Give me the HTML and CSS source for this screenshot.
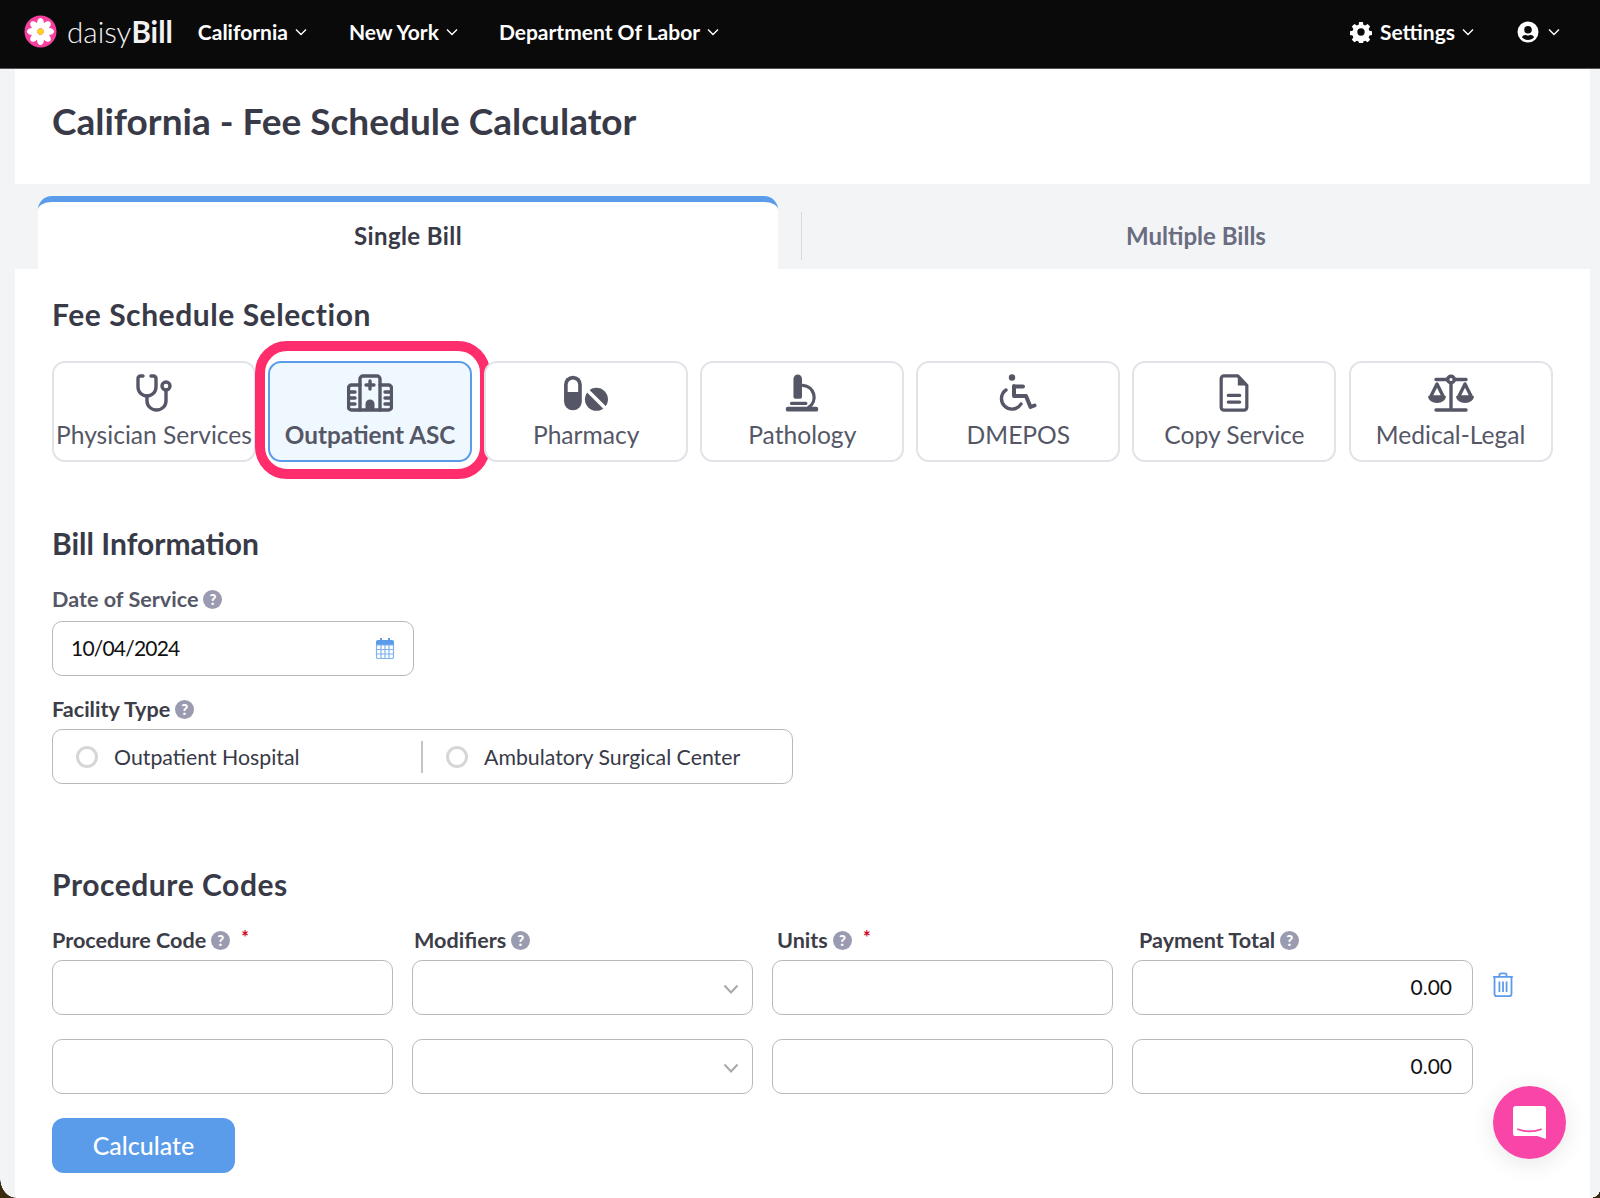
FILE: index.html
```html
<!DOCTYPE html>
<html lang="en">
<head>
  <meta charset="UTF-8" />
  <title>California - Fee Schedule Calculator</title>
  <link rel="stylesheet" href="styles.css">
</head>
<body>

  <!-- Top nav -->
  <nav class="topnav">
    <a class="logo">
      <svg class="logo-mark" viewBox="0 0 34 34">
        <circle cx="17" cy="17" r="16.5" fill="#f5409e"/>
        <g fill="#fff">
          <ellipse cx="17" cy="8.5" rx="3.6" ry="5.5"/>
          <ellipse cx="17" cy="8.5" rx="3.6" ry="5.5" transform="rotate(45 17 17)"/>
          <ellipse cx="17" cy="8.5" rx="3.6" ry="5.5" transform="rotate(90 17 17)"/>
          <ellipse cx="17" cy="8.5" rx="3.6" ry="5.5" transform="rotate(135 17 17)"/>
          <ellipse cx="17" cy="8.5" rx="3.6" ry="5.5" transform="rotate(180 17 17)"/>
          <ellipse cx="17" cy="8.5" rx="3.6" ry="5.5" transform="rotate(225 17 17)"/>
          <ellipse cx="17" cy="8.5" rx="3.6" ry="5.5" transform="rotate(270 17 17)"/>
          <ellipse cx="17" cy="8.5" rx="3.6" ry="5.5" transform="rotate(315 17 17)"/>
        </g>
        <circle cx="17" cy="17" r="3.2" fill="#ffd21f"/>
      </svg>
      <span class="logo-text">daisy<b>Bill</b></span>
    </a>
    <a class="nav-link nav-california">California <svg class="caret" viewBox="0 0 12 8"><path d="M1 1.500l5 5 5-5"/></svg></a>
    <a class="nav-link nav-newyork">New York <svg class="caret" viewBox="0 0 12 8"><path d="M1 1.500l5 5 5-5"/></svg></a>
    <a class="nav-link">Department Of Labor <svg class="caret" viewBox="0 0 12 8"><path d="M1 1.500l5 5 5-5"/></svg></a>
    <div class="nav-right">
      <a class="nav-link">
        <svg class="nav-icon" viewBox="0 0 24 24"><path fill-rule="evenodd" d="M10 1h4l.6 3 2 .9 2.600-1.700 2.800 2.800-1.700 2.600.9 2 3 .6v4l-3 .6-.9 2 1.700 2.600-2.800 2.800-2.600-1.700-2 .9-.6 3h-4l-.6-3-2-.9-2.600 1.700-2.800-2.800 1.700-2.600-.9-2-3-.6v-4l3-.6.9-2-1.700-2.600 2.800-2.800 2.600 1.700 2-.9zM12 8a4 4 0 1 0 0 8 4 4 0 0 0 0-8z"/></svg>
        Settings <svg class="caret" viewBox="0 0 12 8"><path d="M1 1.500l5 5 5-5"/></svg>
      </a>
      <a class="nav-link nav-user">
        <svg class="nav-icon" viewBox="1 1 22 22"><path fill-rule="evenodd" d="M12 1.500a10.500 10.500 0 1 1 0 21 10.500 10.500 0 0 1 0-21zM12 6a3.800 3.800 0 1 0 0 7.600A3.800 3.800 0 0 0 12 6zM12 20c2.400 0 4.500-1 6-2.700-.5-1.500-1.800-2.300-3.300-2.300-.9 0-1.500.5-2.700.5S10.200 15 9.300 15C7.800 15 6.500 15.800 6 17.300 7.500 19 9.600 20 12 20z"/></svg>
        <svg class="caret" viewBox="0 0 12 8"><path d="M1 1.500l5 5 5-5"/></svg>
      </a>
    </div>
  </nav>

  <main class="page">
    <header class="page-header">
      <h1>California - Fee Schedule Calculator</h1>
    </header>

    <div class="tabs">
      <div class="tab tab-active">Single Bill</div>
      <div class="tab-divider"></div>
      <div class="tab">Multiple Bills</div>
    </div>

    <section class="panel">
      <h2>Fee Schedule Selection</h2>
      <div class="schedule-grid">
        <div class="schedule-card">
          <svg class="card-icon" viewBox="0 0 38 38"><path d="M8 2H5.500A2.500 2.500 0 0 0 3 4.500V13a9 9 0 0 0 18 0V4.500A2.500 2.500 0 0 0 18.500 2H16"/><path d="M12 22v5a9.500 9 0 0 0 19 0V16"/><circle cx="31" cy="12" r="4"/></svg>
          <span class="card-name">Physician Services</span>
        </div>
        <div class="schedule-card card-selected">
          <svg class="card-icon icon-wide" viewBox="0 0 46 38"><path d="M13 11H4.500A3 3 0 0 0 1.500 14v19a3 3 0 0 0 3 3h37a3 3 0 0 0 3-3V14a3 3 0 0 0-3-3H33"/><path d="M13 36V5a3 3 0 0 1 3-3h14a3 3 0 0 1 3 3v31"/><path class="solid" d="M18.500 36v-6a4.500 4.500 0 0 1 9 0v6z"/><path d="M23 7v8M19 11h8M1.500 18H8M1.500 24H8M1.500 30H8M38 18h6.500M38 24h6.500M38 30h6.500"/></svg>
          <span class="card-name">Outpatient ASC</span>
          <div class="callout"></div>
        </div>
        <div class="schedule-card">
          <svg class="card-icon icon-wide" viewBox="0 0 44 34"><path class="solid" d="M1 9a8.500 8.500 0 0 1 17 0v16a8.500 8.500 0 0 1-17 0z"/><path class="knock" d="M4.500 16V9a5 5 0 0 1 10 0v7z"/><circle class="solid" cx="32" cy="23" r="11"/><path class="knock-line" d="M24 15l16 16"/></svg>
          <span class="card-name">Pharmacy</span>
        </div>
        <div class="schedule-card">
          <svg class="card-icon" viewBox="0 0 40 40"><path class="solid" d="M11 5a4.500 4.500 0 0 1 9 0v19a2 2 0 0 1-2 2h-5a2 2 0 0 1-2-2z"/><path d="M21 12a12.500 12.500 0 0 1 6 23"/><path d="M9 31h15"/><rect class="solid" x="3" y="34.500" width="34" height="5" rx="2"/></svg>
          <span class="card-name">Pathology</span>
        </div>
        <div class="schedule-card">
          <svg class="card-icon" viewBox="0 0 38 38"><circle class="solid" cx="13" cy="3.500" r="3.200"/><path class="thick" d="M15 12v10h12l4.500 11 4-1.500M15 12.500h9"/><path d="M7 16a10.500 10.500 0 1 0 15 14"/></svg>
          <span class="card-name">DMEPOS</span>
        </div>
        <div class="schedule-card">
          <svg class="card-icon" viewBox="0 0 40 40"><path d="M24 2H9.500a3 3 0 0 0-3 3v30a3 3 0 0 0 3 3h21a3 3 0 0 0 3-3V12z"/><path class="solid" d="M24 2v10h9.500z"/><path d="M14 22.500h12M14 29.500h12"/></svg>
          <span class="card-name">Copy Service</span>
        </div>
        <div class="schedule-card">
          <svg class="card-icon icon-wide" viewBox="0 0 46 38"><circle cx="23" cy="5.500" r="3.300"/><path d="M8 5.500h11.500M26.500 5.500H38M23 9v27M8 36h30M9 10L2.500 23h13zM37 10l-6.500 13h13z"/><path class="solid" d="M0 22h18a9 7 0 0 1-18 0zM28 22h18a9 7 0 0 1-18 0z"/></svg>
          <span class="card-name">Medical-Legal</span>
        </div>
      </div>

      <h2 class="bill-title">Bill Information</h2>
      <label class="field-label date-label">Date of Service <i class="help">?</i></label>
      <div class="input date-input">
        <span class="date-value">10/04/2024</span>
        <svg class="calendar" viewBox="0 0 20 22"><path class="cal-head" d="M1 5a2 2 0 0 1 2-2h14a2 2 0 0 1 2 2v3H1z"/><path class="cal-rings" d="M6 1v4M14 1v4"/><path class="cal-grid" d="M1.500 8h17v12a1.500 1.500 0 0 1-1.500 1.500H3A1.500 1.500 0 0 1 1.500 20zM1.500 12.500h17M1.500 17h17M6 8v13.500M10 8v13.500M14 8v13.500"/></svg>
      </div>

      <label class="field-label facility-label">Facility Type <i class="help">?</i></label>
      <div class="input radio-group">
        <div class="radio-option"><span class="radio"></span>Outpatient Hospital</div>
        <div class="radio-option radio-second"><span class="radio"></span>Ambulatory Surgical Center</div>
      </div>

      <h2 class="codes-title">Procedure Codes</h2>
      <div class="codes-grid">
        <label class="field-label">Procedure Code <i class="help">?</i><em class="req">*</em></label>
        <label class="field-label label-modifiers">Modifiers <i class="help">?</i></label>
        <label class="field-label label-units">Units <i class="help">?</i><em class="req">*</em></label>
        <label class="field-label label-payment">Payment Total <i class="help">?</i></label>
        <span></span>

        <div class="input"></div>
        <div class="input select"><svg class="select-caret" viewBox="0 0 16 10"><path d="M1.500 1.500L8 8.500l6.500-7"/></svg></div>
        <div class="input"></div>
        <div class="input amount">0.00</div>
        <svg class="trash" viewBox="0 0 24 28"><path d="M1 5.500h22M8 5V3.500A2 2 0 0 1 10 1.500h4a2 2 0 0 1 2 2V5M2.500 6v18.500a2.500 2.500 0 0 0 2.500 2.500h14a2.500 2.500 0 0 0 2.500-2.500V6M8 10.500v12M12 10.500v12M16 10.500v12"/></svg>

        <div class="input"></div>
        <div class="input select"><svg class="select-caret" viewBox="0 0 16 10"><path d="M1.500 1.500L8 8.500l6.500-7"/></svg></div>
        <div class="input"></div>
        <div class="input amount">0.00</div>
        <span></span>
      </div>

      <button class="calc-button">Calculate</button>
    </section>
  </main>

  <!-- Chat launcher floats over the page -->
  <div class="chat-launcher">
    <svg viewBox="0 0 34 34" class="chat-icon"><path fill="#fff" d="M3 0h28a3 3 0 0 1 3 3v31l-9-3H3a3 3 0 0 1-3-3V3a3 3 0 0 1 3-3z"/><path fill="none" stroke="#f945a7" stroke-width="1.800" stroke-linecap="round" d="M5 24c7 3 17 3 24 0"/></svg>
  </div>

  <!-- window corners of the capture -->
  <div class="corner corner-left"></div>
  <div class="corner corner-right"></div>

</body>
</html>
```

FILE: styles.css
```css
* {
  box-sizing: border-box;
}

html, body {
  margin: 0;
  height: 1198px;
  overflow: hidden;
}

body {
  background: #f3f4f6;
  font-family: "Lato", "Liberation Sans", sans-serif;
  color: #383a47;
}

.topnav {
  display: flex;
  align-items: center;
  height: 69px;
  padding: 0 24px 5px;
  background: #0a0a0b;
  border-bottom: 1px solid #55565a;
  color: #fff;
}

.logo {
  display: flex;
  align-items: center;
  margin-right: 25px;
}

.logo-mark {
  width: 33px;
  height: 33px;
  margin-right: 10px;
}

.logo-text {
  font-size: 29.600px;
  font-weight: 300;
  color: #f2f2f2;
}

.logo-text b {
  font-weight: 700;
}

.nav-link {
  display: flex;
  align-items: center;
  gap: 7px;
  font-size: 21px;
  font-weight: 700;
  white-space: nowrap;
}

.nav-california {
  margin-right: 42px;
}

.nav-newyork {
  margin-right: 41px;
}

.nav-right {
  display: flex;
  align-items: center;
  margin-left: auto;
  margin-right: 16px;
}

.nav-icon {
  width: 22px;
  height: 22px;
  fill: #fff;
  margin-right: 1px;
}

.nav-user {
  margin-left: 43px;
  gap: 8px;
}

.caret {
  width: 12px;
  height: 8px;
  fill: none;
  stroke: #fff;
  stroke-width: 1.4;
}

.page {
  margin: 0 10px 0 15px;
}

.page-header {
  height: 115px;
  padding: 29px 37px 0;
  background: #fff;
}

h1 {
  margin: 0;
  font-size: 37px;
  font-weight: 700;
  line-height: 46px;
}

.tabs {
  display: flex;
  align-items: stretch;
  height: 85px;
  padding: 12px 0 0 23px;
  font-size: 24px;
  font-weight: 700;
}

.tab {
  flex: 1;
  display: flex;
  align-items: center;
  justify-content: center;
  padding-top: 6px;
  color: #6a6c80;
}

.tab-active {
  flex: 0 0 740px;
  padding-top: 0;
  background: #fff;
  border-top: 6px solid #5a9bea;
  border-radius: 14px 14px 0 0;
  letter-spacing: 0.4px;
  color: #383a47;
}

.tab-divider {
  width: 1px;
  margin: 16px 0 9px 23px;
  background: #d8d9df;
}

.panel {
  height: 929px;
  padding: 23px 37px 0;
  background: #fff;
}

h2 {
  margin: 0;
  font-size: 30px;
  font-weight: 700;
  line-height: 44px;
  letter-spacing: 0.55px;
}

.schedule-grid {
  display: grid;
  grid-template-columns: repeat(7, 204px);
  gap: 12.1px;
  margin-top: 25px;
  width: 1502px;
}

.schedule-card {
  position: relative;
  display: flex;
  flex-direction: column;
  align-items: center;
  height: 101px;
  padding-top: 11px;
  background: #fff;
  border: 2px solid #e2e3e8;
  border-radius: 13px;
  color: #555766;
}

.card-name {
  position: absolute;
  left: -4px;
  right: -4px;
  top: 57px;
  text-align: center;
  font-size: 24.6px;
  line-height: 30px;
  white-space: nowrap;
}

.card-icon {
  width: 38px;
  height: 38px;
  fill: none;
  stroke: #555766;
  stroke-width: 3.4;
  stroke-linecap: round;
  stroke-linejoin: round;
}

.icon-wide {
  width: 46px;
}

.card-icon .solid {
  fill: #555766;
  stroke: none;
}

.card-icon .thick {
  stroke-width: 4;
}

.card-icon .knock {
  fill: #fff;
  stroke: none;
}

.card-icon .knock-line {
  stroke: #fff;
}

.card-selected {
  background: #f0f8ff;
  border: 2px solid #5a9bea;
}

.card-selected .card-name {
  font-size: 24.3px;
  font-weight: 700;
}

/* pink marker drawn over the screenshot */
.callout {
  position: absolute;
  left: -15px;
  right: -20px;
  top: -22px;
  bottom: -19px;
  border: 10px solid #ff2d6b;
  border-radius: 32px;
  pointer-events: none;
}

.bill-title {
  margin-top: 59px;
  letter-spacing: 0;
}

.field-label {
  display: flex;
  align-items: center;
  font-size: 21.6px;
  font-weight: 700;
  line-height: 26px;
  color: #3c3d47;
  white-space: nowrap;
}

.panel > .field-label {
  margin-top: 21px;
}

.panel > .date-label {
  color: #555766;
}

.label-modifiers {
  padding-left: 2px;
}

.label-units {
  padding-left: 5px;
}

.label-payment {
  padding-left: 7px;
}

.help {
  display: inline-block;
  width: 19px;
  height: 19px;
  margin-left: 5px;
  border-radius: 50%;
  background: #9a9bb0;
  color: #fff;
  font-size: 15px;
  font-style: normal;
  font-weight: 900;
  line-height: 19px;
  text-align: center;
}

.req {
  margin-left: 11px;
  margin-bottom: 6px;
  color: #d0021b;
  font-size: 18px;
  font-style: normal;
  line-height: 18px;
}

.input {
  height: 55px;
  border: 1.5px solid #b9b9bd;
  border-radius: 10px;
  background: #fff;
  color: #111;
  font-size: 21px;
}

.date-input {
  display: flex;
  align-items: center;
  justify-content: space-between;
  width: 362px;
  margin-top: 9px;
  padding: 0 18px 2px;
}

.date-value {
  letter-spacing: -0.8px;
}

.calendar {
  width: 20px;
  height: 22px;
}

.cal-head {
  fill: #5a9bea;
}

.cal-rings {
  fill: none;
  stroke: #5a9bea;
  stroke-width: 2;
}

.cal-grid {
  fill: none;
  stroke: #7fb2ee;
  stroke-width: 1.2;
}

.panel > .facility-label {
  margin-top: 20px;
}

.radio-group {
  display: flex;
  align-items: center;
  width: 741px;
  margin-top: 7px;
  font-size: 21.3px;
}

.radio-option {
  display: flex;
  align-items: center;
  height: 32px;
  width: 368px;
  padding-left: 23px;
  color: #383a47;
}

.radio-second {
  border-left: 2px solid #c4c4c8;
}

.radio {
  width: 22px;
  height: 22px;
  margin-right: 16px;
  border: 3px solid #d6d6d6;
  border-radius: 50%;
}

.codes-title {
  margin-top: 78px;
}

.codes-grid {
  display: grid;
  grid-template-columns: repeat(4, 341px) 50px;
  column-gap: 19px;
  row-gap: 24px;
  align-items: center;
  margin-top: 21px;
  width: 1500px;
}

.codes-grid .field-label {
  margin-bottom: -17px;
}

.select {
  position: relative;
}

.select-caret {
  position: absolute;
  right: 13px;
  top: 23px;
  width: 16px;
  height: 10px;
  fill: none;
  stroke: #a9a9ad;
  stroke-width: 2;
}

.amount {
  display: flex;
  align-items: center;
  justify-content: flex-end;
  padding: 0 20px 2px 0;
}

.trash {
  width: 22px;
  height: 25px;
  margin: 0 0 7px 0;
  fill: none;
  stroke: #5a9bea;
  stroke-width: 2;
}

.calc-button {
  display: block;
  width: 183px;
  height: 55px;
  margin-top: 24px;
  padding-bottom: 3px;
  border: none;
  border-radius: 12px;
  background: #5a9bea;
  color: #fff;
  font-family: inherit;
  font-size: 25px;
  font-weight: 500;
}

.chat-launcher {
  position: fixed;
  left: 1493px;
  top: 1086px;
  display: flex;
  align-items: center;
  justify-content: center;
  width: 73px;
  height: 73px;
  border-radius: 50%;
  background: #f945a7;
  box-shadow: 0 4px 24px rgba(0, 0, 0, 0.1);
}

.chat-icon {
  width: 33px;
  height: 37px;
}

.corner {
  position: fixed;
  bottom: 0;
  width: 16px;
  height: 20px;
}

.corner-left {
  left: 0;
  background: radial-gradient(ellipse 16px 20px at 100% 0, transparent 97%, #3a2a10 100%);
}

.corner-right {
  right: 0;
  width: 10px;
  height: 8px;
  background: radial-gradient(ellipse 10px 8px at 0 0, transparent 97%, #3a2a10 100%);
}
```
